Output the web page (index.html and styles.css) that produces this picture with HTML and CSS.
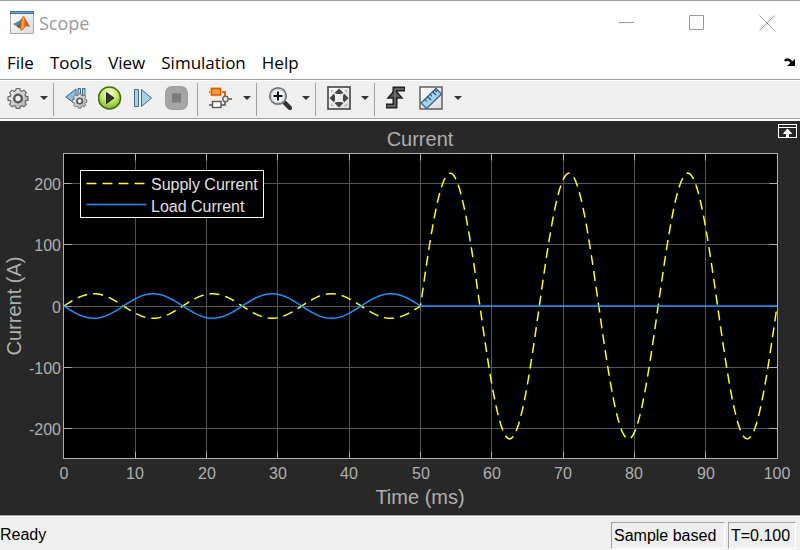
FILE: index.html
```html
<!DOCTYPE html>
<html lang="en">
<head>
    <meta charset="UTF-8" />
    <meta name="viewport" content="width=device-width, initial-scale=1" />
    <title>Scope</title>
    <link rel="stylesheet" href="styles.css">
</head>
<body>
    <header class="title-bar">
        <svg class="app-icon" viewBox="0 0 24 24" aria-hidden="true">
            <defs>
                <linearGradient id="flame" x1="0" x2="1"><stop offset="0" stop-color="#7a2a1c" /><stop offset=".45" stop-color="#f08a24" /><stop offset="1" stop-color="#b5301a" /></linearGradient>
                <linearGradient id="paper" x1="0" y1="0" x2="1" y2="1"><stop offset="0" stop-color="#fff" /><stop offset="1" stop-color="#dcdcdc" /></linearGradient>
            </defs>
            <rect x=".5" y=".5" width="23" height="22" fill="url(#paper)" stroke="#a9a9a9" />
            <rect x="0" y="0" width="24" height="3" fill="#3f7198" />
            <rect x="1" y="1" width="22" height="1" fill="#72a8cc" />
            <path d="M3 13 8 10.500 11 8.500 13 5.500 9.500 15 7 15.500Z" fill="#3f8fc0" />
            <path d="M7 15.500 10 12 13 5 10.500 15 9 17Z" fill="#24445c" />
            <path d="M7 15.500C9.500 14 11 9 13 4.500 14.500 4.500 17 11 20.500 16.500 18 14.500 16.500 15 15 16.500 14 18 12.500 19.500 11 20 10.500 18 9 15.500 7 15.500Z" fill="url(#flame)" />
            <path d="M13 5C12.500 10 12 14 11 19 14 17 14 10 13 5Z" fill="#f9b344" />
        </svg>
        <h1 class="title">Scope</h1>
        <div class="window-buttons">
            <button type="button" aria-label="Minimize"><svg viewBox="0 0 16 16"><path d="M0 7.500H15" /></svg></button>
            <button type="button" aria-label="Maximize"><svg viewBox="0 0 16 16"><path d="M.5.5H14.500V14.500H.5Z" /></svg></button>
            <button type="button" aria-label="Close"><svg viewBox="0 0 16 16"><path d="M.5.5 15.500 15.500M15.500.5.5 15.500" /></svg></button>
        </div>
    </header>

    <nav class="menu-bar" aria-label="Main menu">
        <button type="button">File</button>
        <button type="button">Tools</button>
        <button type="button">View</button>
        <button type="button">Simulation</button>
        <button type="button">Help</button>
        <button type="button" class="dock" aria-label="Dock window">
            <svg viewBox="0 0 12 9"><path d="M1 3C3 0 6 2 8 5" fill="none" stroke="#000" stroke-width="2.500" /><path d="M11 1V8H3Z" /></svg>
        </button>
    </nav>

    <div class="toolbar" role="toolbar" aria-label="Scope tools">
        <div class="tool-group first">
            <button type="button" aria-label="Configuration properties">
                <svg viewBox="0 0 24 24">
                    <defs><linearGradient id="metal" x1="0" y1="0" x2="1" y2="1"><stop offset="0" stop-color="#f6f6f6" /><stop offset="1" stop-color="#aaa" /></linearGradient></defs>
                    <g id="gear">
                        <path d="M10.200 2.500h3.600l.5 2.200 1.500.7 2.100-1.200 2.400 2.500-1.200 2 .6 1.500 2.300.6v3.400l-2.300.6-.6 1.500 1.200 2-2.400 2.500-2.100-1.200-1.500.7-.5 2.200h-3.600l-.5-2.200-1.500-.7-2.100 1.200-2.400-2.500 1.200-2-.6-1.500-2.300-.6v-3.400l2.300-.6.6-1.500-1.200-2 2.400-2.500 2.100 1.200 1.500-.7Z" fill="url(#metal)" stroke="#666" stroke-width="1.200" />
                        <circle cx="12" cy="12.500" r="3.800" fill="#eee" stroke="#555" stroke-width="2.300" />
                    </g>
                </svg>
            </button>
            <button type="button" class="caret" aria-label="Configuration menu"></button>
        </div>
        <div class="tool-group run">
            <button type="button" aria-label="Step back options">
                <svg viewBox="0 0 24 24">
                    <path d="M.8 11 11 3V18.500Z" fill="#8dbadd" stroke="#3c6488" />
                    <path d="M13 2.500h2.500v8H13ZM17.500 2.500H20v8h-2.500Z" fill="#b6d6ec" stroke="#3c6488" />
                    <use href="#gear" transform="translate(6 6) scale(.72)" />
                </svg>
            </button>
            <button type="button" aria-label="Run">
                <svg viewBox="0 0 24 24">
                    <defs><radialGradient id="go" cx=".5" cy=".3" r=".7"><stop offset="0" stop-color="#f7ffd9" /><stop offset=".5" stop-color="#c5e96d" /><stop offset="1" stop-color="#7eb928" /></radialGradient></defs>
                    <circle cx="11.500" cy="12" r="11" fill="url(#go)" stroke="#446d19" stroke-width="1.600" />
                    <path d="M8.500 6.500 16 12 8.500 17.500Z" fill="#333" stroke="#222" />
                </svg>
            </button>
            <button type="button" aria-label="Step forward">
                <svg viewBox="0 0 24 24">
                    <path d="M3.500 3.500h4v17h-4Z" fill="#a8cfea" stroke="#416a90" />
                    <path d="M10.500 3.500 20.500 12 10.500 20.500Z" fill="#a8cfea" stroke="#416a90" />
                </svg>
            </button>
            <button type="button" aria-label="Stop" disabled>
                <svg viewBox="0 0 24 24">
                    <rect x="1" y="0" width="23" height="24" rx="7" fill="#9d9d9d" />
                    <rect x="2" y="1" width="21" height="22" rx="6" fill="#a5a5a5" />
                    <rect x="8" y="7.500" width="9" height="9" fill="#7b7b7b" />
                </svg>
            </button>
        </div>
        <div class="tool-group">
            <button type="button" aria-label="Highlight simulink block">
                <svg viewBox="0 0 24 24">
                    <path d="M0 6H16V11M0 19H4M12 19H16V15M19 13H23" fill="none" stroke="#555" stroke-width="1.500" />
                    <path d="M0 6H3M12 6H16V11" fill="none" stroke="#dd6b1d" stroke-width="1.800" />
                    <rect x="1" y="1" width="12" height="9.500" rx="2" fill="#ffd27b" />
                    <rect x="2.500" y="2.500" width="9" height="6.500" fill="#f29a3e" stroke="#cb5c14" stroke-width="1.400" />
                    <rect x="3.500" y="15.500" width="8.500" height="6" fill="#fff" stroke="#555" stroke-width="1.400" />
                    <circle cx="16.500" cy="13" r="2.700" fill="#eee" stroke="#666" stroke-width="1.400" />
                </svg>
            </button>
            <button type="button" class="caret" aria-label="Highlight menu"></button>
        </div>
        <div class="tool-group">
            <button type="button" aria-label="Zoom in">
                <svg viewBox="0 0 24 24">
                    <path d="M15 15 22 22" stroke="#333" stroke-width="4.500" stroke-linecap="round" />
                    <circle cx="10" cy="10" r="8.200" fill="#f4f8fa" stroke="#777" stroke-width="1.800" />
                    <circle cx="10" cy="10" r="6.500" fill="none" stroke="#c4ccd0" />
                    <path d="M10 5.500V14.500M5.500 10H14.500" stroke="#111" stroke-width="2" />
                </svg>
            </button>
            <button type="button" class="caret" aria-label="Zoom menu"></button>
        </div>
        <div class="tool-group">
            <button type="button" aria-label="Scale axes limits">
                <svg viewBox="0 0 24 24">
                    <rect x="1" y="1" width="22" height="22" fill="url(#paper)" stroke="#444" stroke-width="1.600" />
                    <path d="M12 2.500 16.500 7 14 8H10L7.500 7ZM12 21.500 16.500 17 14 16H10L7.500 17ZM2.500 12 7 7.500 8 10V14L7 16.500ZM21.500 12 17 7.500 16 10V14L17 16.500Z" fill="#444" />
                    <path d="M4.500 6.500V4.500H6.500M17.500 4.500H19.500V6.500M4.500 17.500V19.500H6.500M17.500 19.500H19.500V17.500" fill="none" stroke="#aaa" />
                </svg>
            </button>
            <button type="button" class="caret" aria-label="Scale menu"></button>
        </div>
        <div class="tool-group last">
            <button type="button" aria-label="Triggers">
                <svg viewBox="0 0 24 24">
                    <path d="M0 20H9V3H19" fill="none" stroke="#222" stroke-width="5" />
                    <path d="M9 4 16 12H2Z" fill="#555" stroke="#222" stroke-width="1.500" />
                    <path d="M1 20H9V3H18" fill="none" stroke="#777" stroke-width="1.500" />
                </svg>
            </button>
            <button type="button" aria-label="Cursor measurements">
                <svg viewBox="0 0 24 24">
                    <rect x="1" y="1" width="22" height="22" fill="url(#paper)" stroke="#555" stroke-width="1.400" />
                    <path d="M2 17 17 2.500 22.500 8 7.500 22.500Z" fill="#a5d2ee" stroke="#39678c" stroke-width="1.300" />
                    <path d="M6 13 8 15.500M8.500 10.500 12 14M11 8 13 10.500M13.500 5.500 17 9M16 4 18 6" stroke="#285274" stroke-width="1.200" />
                </svg>
            </button>
            <button type="button" class="caret" aria-label="Measurements menu"></button>
        </div>
    </div>

    <main class="scope">
        <svg class="plot" viewBox="0 0 800 394" role="img" aria-labelledby="plot-title">
            <rect class="plot-area" x="63.500" y="32.500" width="714" height="305" />
            <g id="grid"></g>
            <rect class="plot-frame" x="63.500" y="32.500" width="714" height="305" />
            <path class="curve supply" id="supply" />
            <path class="curve load" id="load" />

            <text class="heading" id="plot-title" x="420" y="25" text-anchor="middle">Current</text>
            <text class="heading" x="420" y="383" text-anchor="middle">Time (ms)</text>
            <text class="heading" transform="translate(21 185) rotate(-90)" text-anchor="middle">Current (A)</text>

            <g class="legend">
                <rect x="80.500" y="49.500" width="183" height="47" />
                <path class="curve supply" d="M86.500 62.500H146.500" />
                <path class="curve load" d="M86.500 83.500H146.500" />
                <text x="151" y="69">Supply Current</text>
                <text x="151" y="91">Load Current</text>
            </g>

            <!-- maximize axes -->
            <g class="maximize">
                <rect x="778.500" y="3.500" width="18" height="13" />
                <path d="M779 6.500H796" />
                <path d="M787.500 8 791.500 12.500H788.500V16H786.500V12.500H783.500Z" fill="#fff" />
            </g>
        </svg>
    </main>

    <footer class="status-bar">
        <span class="status">Ready</span>
        <span class="cell mode">Sample based</span>
        <span class="cell time">T=0.100</span>
    </footer>

    <script>
        (() => {
            const svgNS = 'http://www.w3.org/2000/svg';
            const grid = document.getElementById('grid');
            const left = 63.5, right = 777.5, top = 32.5, bottom = 337.5;

            const toX = ms => 64 + ms * 7.13;
            const toY = amps => 185 - amps * 0.6125;

            function add(name, attrs, text) {
                const el = document.createElementNS(svgNS, name);
                for (const key in attrs) el.setAttribute(key, attrs[key]);
                if (text !== undefined) el.textContent = text;
                grid.appendChild(el);
            }

            // Vertical grid lines, ticks and time labels
            for (let ms = 0; ms <= 100; ms += 10) {
                const x = Math.floor(toX(ms)) + 0.5;
                if (ms > 0 && ms < 100) {
                    add('path', { class: 'grid-line', d: `M${x} ${top}V${bottom}` });
                    add('path', { class: 'tick', d: `M${x} ${top}v7M${x} ${bottom}v-7` });
                }
                add('text', { class: 'label', x: Math.round(toX(ms)), y: 358, 'text-anchor': 'middle' }, ms);
            }

            // Horizontal grid lines, ticks and current labels
            for (let amps = -200; amps <= 200; amps += 100) {
                const y = Math.floor(toY(amps)) + 0.5;
                add('path', { class: 'grid-line', d: `M${left} ${y}H${right}` });
                add('path', { class: 'tick', d: `M${left} ${y}h8M${right} ${y}h-8` });
                add('text', { class: 'label', x: 61, y: y + 6.5, 'text-anchor': 'end' }, amps);
            }

            // 60 Hz currents, the load drops out at 50 ms
            const supply = [], load = [];
            for (let ms = 0; ms <= 100; ms += 0.25) {
                const wave = Math.sin(2 * Math.PI * 0.06 * ms);
                supply.push(`${toX(ms)} ${toY((ms < 50 ? 20 : 217) * wave)}`);
                load.push(`${toX(ms)} ${toY(ms < 50 ? -20 * wave : 0)}`);
            }
            document.getElementById('supply').setAttribute('d', 'M' + supply.join('L'));
            document.getElementById('load').setAttribute('d', 'M' + load.join('L'));
        })();
    </script>
</body>
</html>
```
FILE: styles.css
```css
*, *::before, *::after {
    box-sizing: border-box;
}

body {
    margin: 0;
    min-height: 100vh;
    display: flex;
    flex-direction: column;
    background: #fff;
    color: #000;
    font-family: "Open Sans", "Noto Sans", sans-serif;
}

button {
    padding: 0;
    border: none;
    background: none;
    color: inherit;
    font: inherit;
}

svg {
    display: block;
}

/* Title bar */
.title-bar {
    display: flex;
    align-items: center;
    height: 45px;
    padding: 0 25px 0 10px;
    border-top: 1px solid #a0a0a0;
}

.app-icon {
    width: 24px;
    height: 24px;
}

.title {
    margin: 0 0 0 5px;
    color: #999;
    font-size: 18px;
    font-weight: 400;
}

.window-buttons {
    display: flex;
    gap: 54px;
    margin-left: auto;
}

.window-buttons svg {
    width: 16px;
    height: 16px;
    fill: none;
    stroke: #999;
}

/* Menu bar */
.menu-bar {
    display: flex;
    align-items: center;
    gap: 16px;
    height: 34px;
    padding: 0 4px 0 7px;
    font-size: 17px;
}

.dock {
    margin-left: auto;
}

.dock svg {
    width: 12px;
    height: 9px;
}

/* Toolbar */
.toolbar {
    display: flex;
    height: 42px;
    padding: 3px 0;
    border-top: 1px solid #a0a0a0;
    border-bottom: 2px solid #fff;
    background: #efefef;
    box-shadow: inset 0 1px #fff, inset 0 -1px #a0a0a0;
}

.tool-group {
    display: flex;
    align-items: center;
    gap: 8px;
    padding: 0 3px 3px 11px;
    border-right: 1px solid #a0a0a0;
}

.tool-group.first {
    padding-left: 6px;
}

.tool-group.run {
    gap: 9px;
    padding-right: 9px;
}

.tool-group.last {
    gap: 9px;
    border-right: none;
}

.tool-group svg {
    width: 24px;
    height: 24px;
}

.caret {
    display: flex;
    justify-content: center;
    width: 12px;
}

.caret::before {
    content: "";
    border: 4px solid transparent;
    border-top-color: #333;
    border-bottom: none;
}

/* Scope display */
.scope {
    flex: 1;
    background: #282828;
}

.plot {
    width: 100%;
    height: auto;
    font-family: "Liberation Sans", Arial, sans-serif;
    font-size: 16px;
}

.plot-area {
    fill: #000;
}

.plot-frame {
    fill: none;
    stroke: #afafaf;
}

.grid-line {
    fill: none;
    stroke: #555;
}

.tick {
    fill: none;
    stroke: #afafaf;
}

.label {
    fill: #afafaf;
}

.heading {
    fill: #afafaf;
    font-size: 20px;
}

.curve {
    fill: none;
    stroke-width: 1.5px;
}

.supply {
    stroke: #ffff11;
    stroke-dasharray: 10 6;
}

.load {
    stroke: #1395ff;
}

.legend rect {
    fill: #000;
    stroke: #fff;
}

.legend text {
    fill: #e0e0e0;
}

.maximize {
    fill: none;
    stroke: #fff;
}

/* Status bar */
.status-bar {
    display: flex;
    align-items: center;
    gap: 3px;
    height: 35px;
    padding: 5px 4px 1px 0;
    border-top: 1px solid #a0a0a0;
    background: #efefef;
    box-shadow: inset 0 1px #fff;
    font-family: "Liberation Sans", Arial, sans-serif;
    font-size: 16px;
}

.status {
    flex: 1;
}

.cell {
    height: 27px;
    padding: 0 2px;
    border: 1px solid #fff;
    border-top-color: #a0a0a0;
    border-left-color: #a0a0a0;
    line-height: 26px;
}

.mode {
    width: 114px;
}

.time {
    width: 68px;
}
```
